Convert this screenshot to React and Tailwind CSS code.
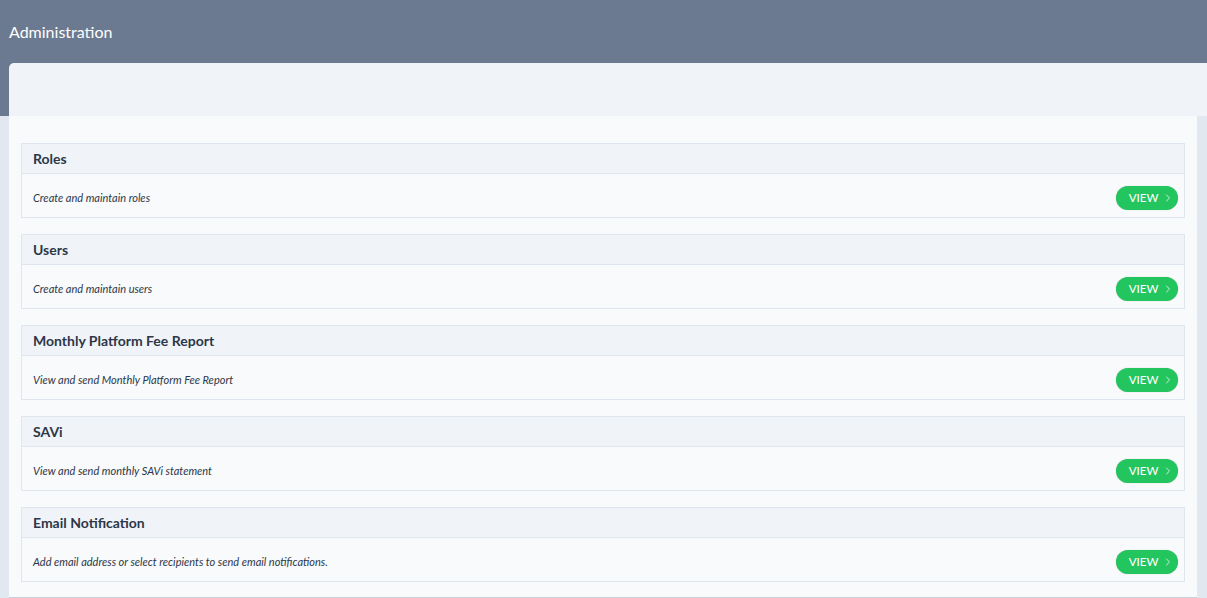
import { ChevronRight } from 'lucide-react';

const sections = [
  { title: 'Roles', text: 'Create and maintain roles' },
  { title: 'Users', text: 'Create and maintain users' },
  { title: 'Monthly Platform Fee Report', text: 'View and send Monthly Platform Fee Report' },
  { title: 'SAVi', text: 'View and send monthly SAVi statement' },
  { title: 'Email Notification', text: 'Add email address or select recipients to send email notifications.' },
];

const AdminSection = ({ title, text }) => (
  <div className="border border-[#e0e6ee] bg-[#f8fafc]">
    <div className="h-[30px] flex items-center px-[11px] bg-[#f0f4f8] border-b border-[#e0e6ee]">
      <h2 className="text-[14px] font-bold text-[#2d3748]">{title}</h2>
    </div>
    <div className="h-[43px] flex items-center justify-between pl-[11px] pr-[6px] pt-[5px]">
      <p className="text-[11px] italic text-[#2d3748]">{text}</p>
      <button className="h-[24px] w-[62px] rounded-full bg-[#22c55e] text-white text-[11.5px] font-medium flex items-center justify-center gap-[4px] pl-[9px] shadow-[0_0_1px_rgba(0,0,0,0.3)]">
        VIEW
        <ChevronRight size={12} strokeWidth={1.5} />
      </button>
    </div>
  </div>
);

export default function App() {
  return (
    <div
      className="min-h-[598px] bg-[linear-gradient(to_bottom,#6b7a91_116px,#e2e8f0_116px)]"
      style={{ fontFamily: 'Lato, "Open Sans", sans-serif' }}
    >
      <div className="h-[63px] flex items-center px-[9px]">
        <h1 className="text-[16px] text-white">Administration</h1>
      </div>
      <div className="ml-[9px]">
        <div className="h-[53px] bg-[#f0f4f8] rounded-tl-[5px]" />
        <div className="mr-[10px] bg-[#f8fafc] px-[12px] pt-[27px] pb-[15px] flex flex-col gap-[16px] border-b border-[#c9d0da]">
          {sections.map((s) => (
            <AdminSection key={s.title} {...s} />
          ))}
        </div>
      </div>
    </div>
  );
}
